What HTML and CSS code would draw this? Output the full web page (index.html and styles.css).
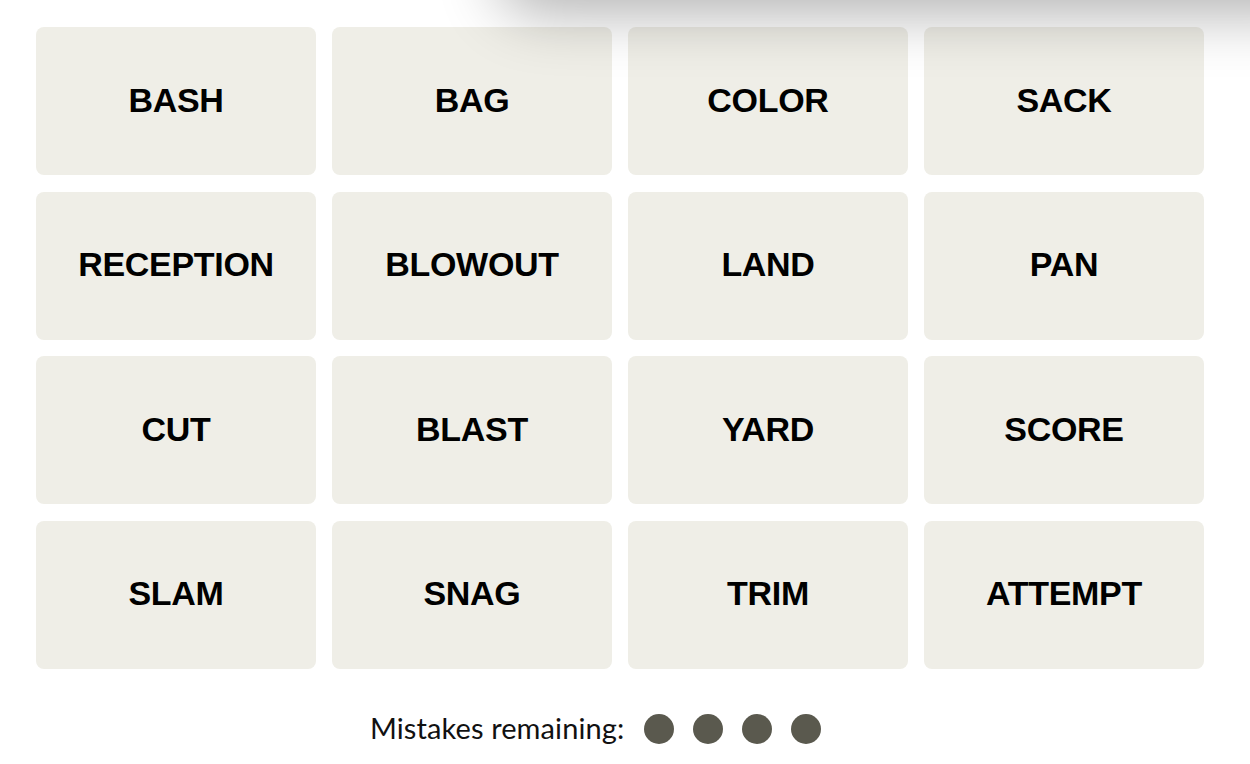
FILE: index.html
```html
<!DOCTYPE html>
<html>
<head>
<meta charset="utf-8">
<link rel="stylesheet" href="styles.css">
</head>
<body>
<div class="shade"></div>
<main class="game">
  <section class="board">
    <div class="tile">BASH</div>
    <div class="tile">BAG</div>
    <div class="tile">COLOR</div>
    <div class="tile">SACK</div>
    <div class="tile">RECEPTION</div>
    <div class="tile">BLOWOUT</div>
    <div class="tile">LAND</div>
    <div class="tile">PAN</div>
    <div class="tile">CUT</div>
    <div class="tile">BLAST</div>
    <div class="tile">YARD</div>
    <div class="tile">SCORE</div>
    <div class="tile">SLAM</div>
    <div class="tile">SNAG</div>
    <div class="tile">TRIM</div>
    <div class="tile">ATTEMPT</div>
  </section>
  <div class="mistakes">
    <span class="label">Mistakes remaining:</span>
    <span class="dots">
      <span class="dot"></span><span class="dot"></span><span class="dot"></span><span class="dot"></span>
    </span>
  </div>
</main>
</body>
</html>
```
FILE: styles.css
```css
html, body {
  margin: 0;
  padding: 0;
  background: #ffffff;
}
body {
  width: 1250px;
  height: 764px;
  overflow: hidden;
  font-family: "Liberation Sans", Arial, sans-serif;
}
.shade {
  position: fixed;
  top: -60px;
  left: 510px;
  right: -80px;
  height: 60px;
  box-shadow: 0 0 60px 14px rgba(0, 0, 0, 0.3);
  background: #ccc;
  z-index: 5;
  border-radius: 40px;
}
.game {
  padding: 27px 0 0 36px;
}
.board {
  display: grid;
  grid-template-columns: repeat(4, 280px);
  grid-auto-rows: 148px;
  column-gap: 16px;
  row-gap: 16.5px;
  width: 1168px;
}
.tile {
  background: #efeee7;
  border-radius: 8px;
  display: flex;
  align-items: center;
  justify-content: center;
  padding-bottom: 2px;
  font-family: "Liberation Sans", Arial, sans-serif;
  font-weight: 700;
  font-size: 34px;
  letter-spacing: -0.3px;
  color: #000;
}
.mistakes {
  display: flex;
  align-items: center;
  margin: 38px 0 0 334px;
  height: 44px;
}
.label {
  font-family: "Lato", "Liberation Sans", sans-serif;
  font-size: 29px;
  color: #111;
  letter-spacing: 0.1px;
  margin-top: -3px;
}
.dots {
  display: flex;
  gap: 19px;
  margin-left: 20px;
}
.dot {
  width: 30px;
  height: 30px;
  border-radius: 50%;
  background: #5a594e;
}
```
